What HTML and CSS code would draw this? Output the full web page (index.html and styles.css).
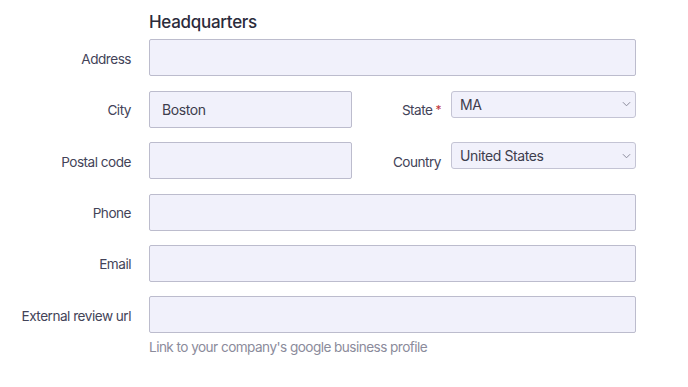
FILE: index.html
```html
<!DOCTYPE html>
<html lang="en">
<head>
<meta charset="utf-8">
<title>Headquarters</title>
<link rel="stylesheet" href="styles.css">
</head>
<body>
<form class="hq">
  <div class="blank"></div>
  <h2 class="title">Headquarters</h2>

  <label class="lbl">Address</label>
  <div class="field wide"></div>

  <label class="lbl">City</label>
  <div class="field"><span class="val">Boston</span></div>
  <div class="side">
    <label class="lbl">State<span class="req">*</span></label>
    <div class="select"><span class="sval">MA</span><svg class="chev" viewBox="0 0 10 6" width="9" height="6"><path d="M1 1l4 4 4-4" fill="none" stroke="#8a8a9a" stroke-width="1.1"/></svg></div>
  </div>

  <label class="lbl">Postal code</label>
  <div class="field"></div>
  <div class="side">
    <label class="lbl low">Country</label>
    <div class="select"><span class="sval">United States</span><svg class="chev" viewBox="0 0 10 6" width="9" height="6"><path d="M1 1l4 4 4-4" fill="none" stroke="#8a8a9a" stroke-width="1.1"/></svg></div>
  </div>

  <label class="lbl">Phone</label>
  <div class="field wide"></div>

  <label class="lbl">Email</label>
  <div class="field wide"></div>

  <label class="lbl">External review url</label>
  <div class="field wide"></div>

  <div class="blank"></div>
  <p class="help">Link to your company's google business profile</p>
</form>
</body>
</html>
```

FILE: styles.css
```css
html, body {
  margin: 0;
  padding: 0;
  background: #ffffff;
}
body {
  font-family: "Inter", "Liberation Sans", sans-serif;
  color: #3f3f4f;
}
.hq {
  display: grid;
  grid-template-columns: 131px 203px 1fr;
  column-gap: 18px;
  row-gap: 14.4px;
  width: 636px;
  padding-top: 11px;
}
.title {
  grid-column: 2 / -1;
  margin: 0 0 -8px 0;
  font-size: 17px;
  line-height: 22px;
  font-weight: 500;
  color: #2b2b3b;
  letter-spacing: -0.3px;
}
.lbl {
  align-self: center;
  justify-self: end;
  padding-top: 2px;
  font-size: 13.6px;
  color: #434358;
  letter-spacing: -0.5px;
  white-space: nowrap;
}
.field {
  box-sizing: border-box;
  height: 37px;
  background: #f1f1fb;
  border: 1px solid #bcbccd;
  border-radius: 2px;
  display: flex;
  align-items: center;
  padding: 0 12px;
}
.field.wide {
  grid-column: 2 / -1;
}
.val {
  font-size: 14px;
  color: #3d3d4d;
  letter-spacing: -0.4px;
}
.side {
  display: flex;
  justify-content: flex-end;
  gap: 10px;
}
.side .lbl {
  align-self: center;
}
.req {
  color: #c0343b;
  margin-left: 3px;
  font-size: 12px;
  position: relative;
  top: -1px;
}
.select {
  box-sizing: border-box;
  width: 185px;
  height: 27px;
  align-self: flex-start;
  background: #f1f1fb;
  border: 1px solid #c4c4d4;
  border-radius: 3px;
  display: flex;
  align-items: center;
  justify-content: space-between;
  padding: 0 4px 0 8px;
}
.sval {
  font-size: 14px;
  color: #3d3d4d;
  letter-spacing: -0.4px;
}
.help {
  grid-column: 2 / -1;
  margin: -9px 0 0 0;
  font-size: 13.6px;
  color: #8b8b9b;
  letter-spacing: -0.55px;
}
```
